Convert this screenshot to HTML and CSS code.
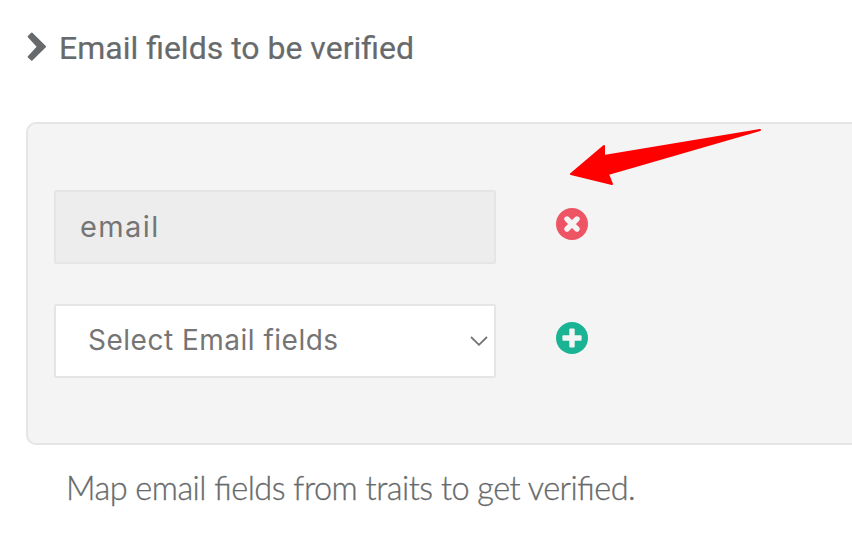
FILE: index.html
```
<!DOCTYPE html>
<html lang="en">
<head>
  <meta charset="UTF-8">
  <meta name="viewport" content="width=device-width, initial-scale=1.0">
  <title>Email fields to be verified</title>
  <link rel="stylesheet" href="styles.css">
</head>
<body>
  <div class="container">
    <h1 class="section-title">
      <svg class="title-icon" viewBox="0 0 20 30"><path d="M5.2.8Q5.8.2 6.4.8L19.8 14.1Q20.4 14.7 19.8 15.3L6.4 28.6Q5.8 29.2 5.2 28.6L1.9 25.4Q1.3 24.8 1.9 24.2L10.6 14.7 1.9 5.2Q1.3 4.6 1.9 4Z"/></svg>
      <span class="title-text">Email fields to be verified</span>
    </h1>
    <div class="panel">
      <form class="field-list">
        <div class="field-row">
          <div class="field field-readonly">email</div>
          <button type="button" class="icon-btn remove-btn" aria-label="Remove">
            <svg viewBox="0 0 32 32"><circle cx="16" cy="16" r="16"/><path d="M11 11 21 21M21 11 11 21"/></svg>
          </button>
        </div>
        <div class="field-row">
          <div class="field field-select">
            <span>Select Email fields</span>
            <svg class="caret" viewBox="0 0 18 10"><path d="M1 1 9 8.8 17 1"/></svg>
          </div>
          <button type="button" class="icon-btn add-btn" aria-label="Add">
            <svg viewBox="0 0 32 32"><circle cx="16" cy="16" r="16"/><rect x="13.3" y="6.4" width="5.4" height="19.2" rx="1"/><rect x="6.4" y="13.3" width="19.2" height="5.4" rx="1"/></svg>
          </button>
        </div>
      </form>
      <svg class="arrow" viewBox="0 0 194 60"><path d="M192 2 36 28 36 18 3 46 44 56 40 46Z"/></svg>
    </div>
    <p class="help-text">Map email fields from traits to get verified.</p>
  </div>
</body>
</html>
```
FILE: styles.css
```
body {
  margin: 0;
  background-color: #fff;
  color: #676a6c;
  overflow: hidden;
}
.container {
  padding: 28px 0 0 26px;
}
.section-title {
  display: flex;
  align-items: center;
  gap: 13px;
  height: 38px;
  margin: 0 0 56px;
  font-family: Roboto, Arial, sans-serif;
  font-size: 32px;
  font-weight: 400;
  line-height: 38px;
}
.title-text {
  padding-top: 1px;
  -webkit-text-stroke: 0.2px #676a6c;
}
.title-icon {
  width: 20px;
  height: 30px;
  fill: #676a6c;
}
.panel {
  position: relative;
  box-sizing: border-box;
  height: 323px;
  margin-right: -20px;
  padding: 66px 26px;
  background-color: #f4f4f4;
  border: 2px solid #e5e5e5;
  border-radius: 10px;
}
.field-list {
  display: flex;
  flex-direction: column;
  gap: 40px;
}
.field-row {
  display: flex;
  align-items: center;
  gap: 60px;
}
.field {
  display: flex;
  align-items: center;
  box-sizing: border-box;
  width: 442px;
  height: 74px;
  padding: 0 24px 2px;
  border: 2px solid #e5e5e5;
  border-radius: 2px;
  color: #757575;
  font-family: Inter, sans-serif;
  font-size: 28px;
}
.field-readonly {
  background-color: #ededed;
  font-size: 29px;
  letter-spacing: 1.4px;
}
.field-select {
  justify-content: space-between;
  padding: 0 6px 2px 32px;
  background-color: #fff;
  letter-spacing: 0.5px;
}
.caret {
  width: 18px;
  height: 10px;
  margin-top: 2px;
  fill: none;
  stroke: #757575;
  stroke-width: 1.8;
}
.icon-btn {
  width: 32px;
  height: 32px;
  margin-bottom: 7px;
  padding: 0;
  border: none;
  background: none;
  cursor: pointer;
}
.icon-btn svg {
  display: block;
}
.icon-btn path {
  fill: none;
  stroke: #f4f4f4;
  stroke-width: 5.4;
  stroke-linecap: round;
}
.icon-btn rect {
  fill: #f4f4f4;
}
.remove-btn circle {
  fill: #ed5565;
}
.add-btn circle {
  fill: #1ab394;
}
/* callout arrow over the panel */
.arrow {
  position: absolute;
  top: 4px;
  left: 540px;
  width: 194px;
  height: 60px;
  fill: #f00;
  stroke: #f00;
  stroke-width: 2;
  stroke-linejoin: round;
}
.help-text {
  margin: 23px 0 0 40px;
  font-family: Lato, sans-serif;
  font-size: 32.5px;
  font-weight: 300;
  line-height: 40px;
  letter-spacing: -0.52px;
  font-feature-settings: "liga" 1;
  -webkit-text-stroke: 0.3px #676a6c;
}
```
